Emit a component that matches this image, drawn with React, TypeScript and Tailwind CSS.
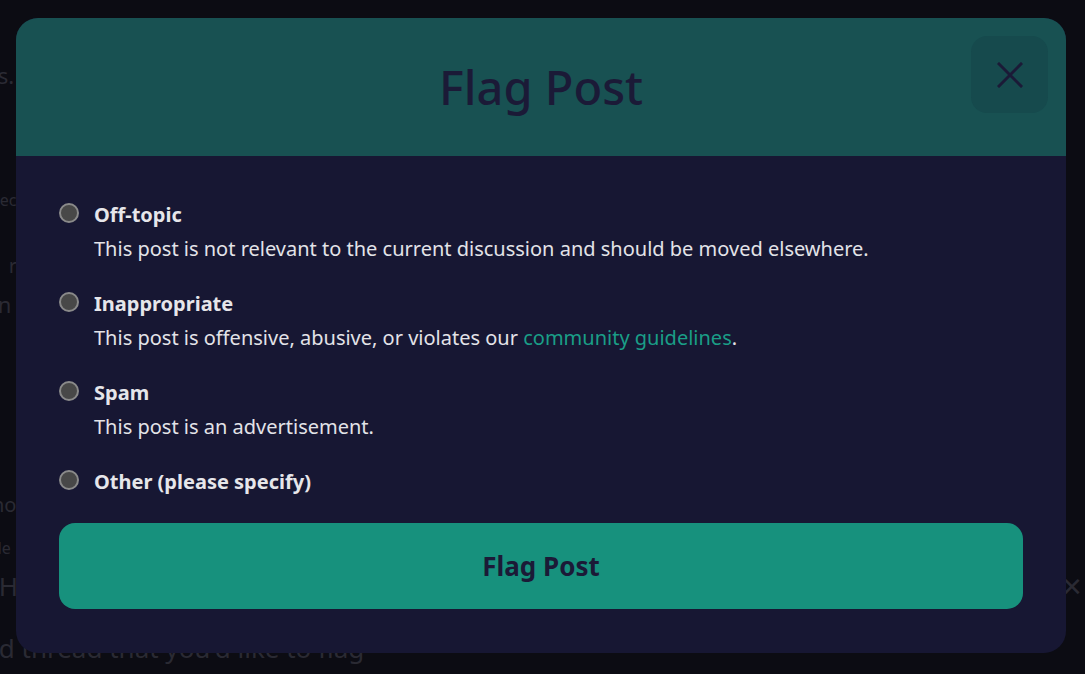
import React from "react";

const options = [
  { title: "Off-topic", desc: <>This post is not relevant to the current discussion and should be moved elsewhere.</> },
  {
    title: "Inappropriate",
    desc: (
      <>
        This post is offensive, abusive, or violates our{" "}
        <a className="text-[#1a9e87]">community guidelines</a>.
      </>
    ),
  },
  { title: "Spam", desc: <>This post is an advertisement.</> },
  { title: "Other (please specify)", desc: null },
];

export default function App() {
  return (
    <div
      className="relative h-[674px] w-[1085px] overflow-hidden bg-[#0c0c13]"
      style={{ fontFamily: '"Noto Sans", "Open Sans", sans-serif' }}
    >
      {/* faint page behind overlay */}
      <div className="flex h-full flex-col pt-[58px] text-[#2a2a33] -ml-[8px]">
        <div className="text-[22px] leading-[34px]">ls.</div>
        <div className="mt-[96px] text-[16px] leading-[24px]">sec</div>
        <div className="mt-[40px] text-[20px] leading-[28px]">1 r</div>
        <div className="mt-[8px] text-[22px] leading-[32px]">in</div>
        <div className="mt-[170px] text-[20px] leading-[30px]">no</div>
        <div className="mt-[16px] text-[16px] leading-[24px]">de</div>
        <div className="mt-[8px] flex items-center justify-between pr-[2px] text-[26px] leading-[36px]">
          <span>&nbsp;H</span>
          <span>✕</span>
        </div>
        <div className="mt-[26px] text-[26px] leading-[36px]">&nbsp;d thread that you'd like to flag</div>
      </div>

      {/* modal */}
      <div className="absolute left-[16px] top-[18px] flex h-[635px] w-[1050px] flex-col overflow-hidden rounded-[22px] bg-[#171733]">
        <div className="relative flex h-[138px] shrink-0 items-center justify-center bg-[#185152]">
          <h1 className="text-[47px] font-medium leading-none text-[#1b1a37]">Flag Post</h1>
          <button className="absolute right-[18px] top-[18px] flex h-[77px] w-[77px] items-center justify-center rounded-[16px] bg-[#164a4d]">
            <svg width="26" height="26" viewBox="0 0 26 26" fill="none" stroke="#1b1a37" strokeWidth="3" strokeLinecap="square">
              <path d="M2 2 L24 24 M24 2 L2 24" />
            </svg>
          </button>
        </div>
        <div className="flex flex-1 flex-col px-[43px] pt-[45px]">
          <div className="flex flex-col gap-[27px]">
            {options.map((o) => (
              <div key={o.title} className="flex items-start gap-[15px]">
                <div className="mt-[2px] h-[20px] w-[20px] shrink-0 rounded-full border-2 border-[#8a8a8a] bg-[#484848]" />
                <div className="flex flex-col">
                  <div className="text-[20px] font-bold leading-[28px] text-[#e6e6ea]">{o.title}</div>
                  {o.desc && (
                    <div className="mt-[6px] text-[20px] leading-[28px] text-[#e3e3e8]">{o.desc}</div>
                  )}
                </div>
              </div>
            ))}
          </div>
          <button className="mt-[27px] flex h-[86px] w-full items-center justify-center rounded-[16px] bg-[#17917d] text-[26px] font-bold text-[#1b1a37]">
            Flag Post
          </button>
        </div>
      </div>
    </div>
  );
}
